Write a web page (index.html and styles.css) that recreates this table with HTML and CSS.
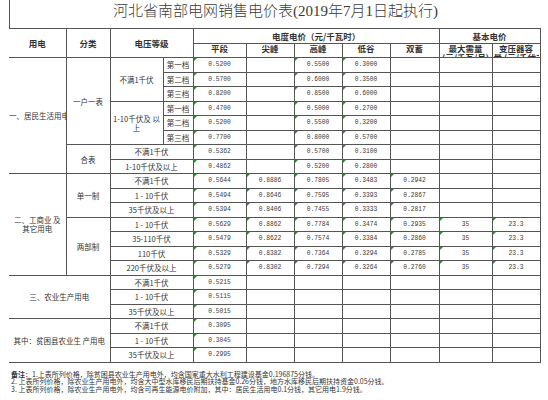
FILE: index.html
```html
<!DOCTYPE html>
<html lang="zh-CN">
<head>
<meta charset="utf-8">
<title>河北省南部电网销售电价表</title>
<link rel="stylesheet" href="styles.css">
</head>
<body>
<div class="sheet">
  <div class="title">河北省南部电网销售电价表(2019年7月1日起执行)</div>
  <table class="tariff">
    <colgroup>
      <col class="c-use"><col class="c-kind"><col class="c-volt"><col class="c-step">
      <col class="c-num"><col class="c-mid"><col class="c-mid"><col class="c-mid"><col class="c-dbl">
      <col class="c-num"><col class="c-mid">
    </colgroup>
    <thead>
      <tr class="h1">
        <th rowspan="2" class="first">用电</th>
        <th rowspan="2">分类</th>
        <th rowspan="2" colspan="2">电压等级</th>
        <th colspan="5">电度电价（元/千瓦时）</th>
        <th colspan="2">基本电价</th>
      </tr>
      <tr class="h2">
        <th>平段</th><th>尖峰</th><th>高峰</th><th>低谷</th><th>双蓄</th>
        <th><div class="clip">最大需量<br>(元/千瓦/月)</div></th>
        <th><div class="clip">变压器容<br>量 (元/千伏安/月)</div></th>
      </tr>
    </thead>
    <tbody>
      <tr>
        <td rowspan="8" class="first lead">一、居民生活用电</td>
        <td rowspan="6">一户一表</td>
        <td rowspan="3">不满1千伏</td>
        <td>第一档</td>
        <td class="n g">0.5200</td><td></td><td class="n g">0.5500</td><td class="n g">0.3000</td><td></td><td></td><td></td>
      </tr>
      <tr>
        <td>第二档</td>
        <td class="n g">0.5700</td><td></td><td class="n g">0.6000</td><td class="n g">0.3500</td><td></td><td></td><td></td>
      </tr>
      <tr>
        <td>第三档</td>
        <td class="n g">0.8200</td><td></td><td class="n g">0.8500</td><td class="n g">0.6000</td><td></td><td></td><td></td>
      </tr>
      <tr>
        <td rowspan="3">1-10千伏及 以<br>上</td>
        <td>第一档</td>
        <td class="n g">0.4700</td><td></td><td class="n g">0.5000</td><td class="n g">0.2700</td><td></td><td></td><td></td>
      </tr>
      <tr>
        <td>第二档</td>
        <td class="n g">0.5200</td><td></td><td class="n g">0.5500</td><td class="n g">0.3200</td><td></td><td></td><td></td>
      </tr>
      <tr>
        <td>第三档</td>
        <td class="n g">0.7700</td><td></td><td class="n g">0.8000</td><td class="n g">0.5700</td><td></td><td></td><td></td>
      </tr>
      <tr>
        <td rowspan="2">合表</td>
        <td colspan="2">不满1千伏</td>
        <td class="n g">0.5362</td><td></td><td class="n g">0.5700</td><td class="n g">0.3100</td><td></td><td></td><td></td>
      </tr>
      <tr>
        <td colspan="2">1-10千伏及以上</td>
        <td class="n g">0.4862</td><td></td><td class="n g">0.5200</td><td class="n g">0.2800</td><td></td><td></td><td></td>
      </tr>
      <tr>
        <td rowspan="7" class="first">二、工商业 及<br>其它用电</td>
        <td rowspan="3">单一制</td>
        <td colspan="2">不满1千伏</td>
        <td class="n g">0.5644</td><td class="n g">0.8886</td><td class="n g">0.7805</td><td class="n g">0.3483</td><td class="n g">0.2942</td><td></td><td></td>
      </tr>
      <tr>
        <td colspan="2">1 - 10千伏</td>
        <td class="n g">0.5494</td><td class="n g">0.8646</td><td class="n g">0.7595</td><td class="n g">0.3393</td><td class="n g">0.2867</td><td></td><td></td>
      </tr>
      <tr>
        <td colspan="2">35千伏及以上</td>
        <td class="n g">0.5394</td><td class="n g">0.8406</td><td class="n g">0.7455</td><td class="n g">0.3333</td><td class="n g">0.2817</td><td></td><td></td>
      </tr>
      <tr>
        <td rowspan="4">两部制</td>
        <td colspan="2">1 - 10千伏</td>
        <td class="n g">0.5629</td><td class="n g">0.8862</td><td class="n g">0.7784</td><td class="n g">0.3474</td><td class="n g">0.2935</td><td class="n g">35</td><td class="n g">23.3</td>
      </tr>
      <tr>
        <td colspan="2">35-110千伏</td>
        <td class="n g">0.5479</td><td class="n g">0.8622</td><td class="n g">0.7574</td><td class="n g">0.3384</td><td class="n g">0.2860</td><td class="n g">35</td><td class="n g">23.3</td>
      </tr>
      <tr>
        <td colspan="2">110千伏</td>
        <td class="n g">0.5329</td><td class="n g">0.8382</td><td class="n g">0.7364</td><td class="n g">0.3294</td><td class="n g">0.2785</td><td class="n g">35</td><td class="n g">23.3</td>
      </tr>
      <tr>
        <td colspan="2">220千伏及以上</td>
        <td class="n g">0.5279</td><td class="n g">0.8302</td><td class="n g">0.7294</td><td class="n g">0.3264</td><td class="n g">0.2760</td><td class="n g">35</td><td class="n g">23.3</td>
      </tr>
      <tr>
        <td rowspan="3" colspan="2" class="first">三、农业生产用电</td>
        <td colspan="2">不满1千伏</td>
        <td class="n g">0.5215</td><td></td><td></td><td></td><td></td><td></td><td></td>
      </tr>
      <tr>
        <td colspan="2">1 - 10千伏</td>
        <td class="n g">0.5115</td><td></td><td></td><td></td><td></td><td></td><td></td>
      </tr>
      <tr>
        <td colspan="2">35千伏及以上</td>
        <td class="n g">0.5015</td><td></td><td></td><td></td><td></td><td></td><td></td>
      </tr>
      <tr>
        <td rowspan="3" colspan="2" class="first">其中：贫困县农业生 产用电</td>
        <td colspan="2">不满1千伏</td>
        <td class="n g">0.3095</td><td></td><td></td><td></td><td></td><td></td><td></td>
      </tr>
      <tr>
        <td colspan="2">1 - 10千伏</td>
        <td class="n g">0.3045</td><td></td><td></td><td></td><td></td><td></td><td></td>
      </tr>
      <tr>
        <td colspan="2">35千伏及以上</td>
        <td class="n g">0.2995</td><td></td><td></td><td></td><td></td><td></td><td></td>
      </tr>
    </tbody>
  </table>
  <div class="notes">
    <p><b>备注</b>：1.上表所列价格，除贫困县农业生产用电外，均含国家重大水利工程建设基金0.196875分钱。</p>
    <p>2. 上表所列价格，除农业生产用电外，均含大中型水库移民后期扶持基金0.26分钱，地方水库移民后期扶持资金0.05分钱。</p>
    <p>3. 上表所列价格，除农业生产用电外，均含可再生能源电价附加，其中：居民生活用电0.1分钱，其它用电1.9分钱。</p>
  </div>
</div>
</body>
</html>
```

FILE: styles.css
```css
html, body {
  margin: 0;
  padding: 0;
  background: #ffffff;
}

body {
  color: #333333;
  font-family: "Noto Sans CJK SC", sans-serif;
}

.sheet {
  margin-left: 9px;
  width: 532px;
}

.title {
  box-sizing: border-box;
  height: 28px;
  padding-top: 2px;
  border-left: 1px solid #555555;
  text-align: center;
  font-family: "Liberation Serif", "Noto Sans CJK SC", serif;
  font-size: 15px;
  line-height: 18px;
  font-weight: 300;
  color: #3a3a3a;
}

.tariff {
  border-collapse: collapse;
  table-layout: fixed;
  width: 531px;
}

.c-use { width: 57px; }
.c-kind { width: 44px; }
.c-volt { width: 53px; }
.c-step { width: 30px; }
.c-num { width: 53px; }
.c-mid { width: 48px; }
.c-dbl { width: 49px; }

.tariff th,
.tariff td {
  border: 1px solid #555555;
  padding: 0 1px;
  text-align: center;
  vertical-align: middle;
  font-size: 7.5px;
  line-height: 9px;
  white-space: nowrap;
  overflow: hidden;
  color: #333333;
}

.tariff th {
  font-size: 8.5px;
  font-weight: bold;
}

.tariff .first {
  border-left: none;
}

.tariff .lead {
  text-align: left;
  padding-left: 0;
}

.h1 { height: 15px; }
.h2 { height: 14px; }
.tariff tbody tr { height: 14.5px; }

.clip {
  height: 13px;
  overflow: hidden;
  line-height: 9px;
}

.h2 th {
  vertical-align: top;
}

.tariff .n {
  font-family: "Liberation Mono", monospace;
  font-size: 6.3px;
  color: #3c3c3c;
}

.tariff .g {
  position: relative;
}

.tariff .g::before {
  content: "";
  position: absolute;
  left: 0;
  top: 0;
  border-top: 3px solid #1f9a1f;
  border-right: 3px solid transparent;
}

.notes {
  margin-top: 8px;
  padding-left: 2px;
  font-size: 7px;
  white-space: nowrap;
  color: #333333;
}

.notes p {
  margin: 0;
  height: 7.7px;
  line-height: 7.7px;
}
```
